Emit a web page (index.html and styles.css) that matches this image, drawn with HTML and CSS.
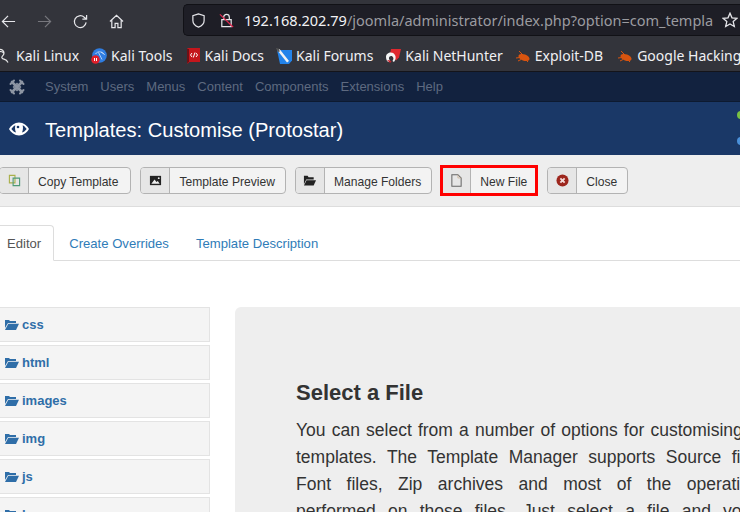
FILE: index.html
```html
<!DOCTYPE html>
<html lang="en">
<head>
<meta charset="utf-8">
<title>Templates: Customise (Protostar)</title>
<link rel="stylesheet" href="styles.css">
</head>
<body>
<header class="browser">
  <div class="toolbar">
    <div class="nav-btns">
      <svg class="tb-icon" viewBox="0 0 16 16"><path d="M15 8H1.500M7.500 2 1.500 8l6 6" fill="none" stroke="#e6e6ea" stroke-width="1.300"/></svg>
      <svg class="tb-icon" viewBox="0 0 16 16"><path d="M1 8h13.500M8.500 2l6 6-6 6" fill="none" stroke="#77777d" stroke-width="1.300"/></svg>
      <svg class="tb-icon" viewBox="0 0 16 16"><path d="M14 9a6.300 6.300 0 1 1-2-5.500L14.500 5.500M14.500 1v4.500H10" fill="none" stroke="#e6e6ea" stroke-width="1.300"/></svg>
      <svg class="tb-icon" viewBox="0 0 16 16"><path d="M1 8 8 1.500 15 8M3 6.500V14.500h3.500V10h3v4.500H13V6.500" fill="none" stroke="#e6e6ea" stroke-width="1.300"/></svg>
    </div>
    <div class="urlbar">
      <svg class="shield" viewBox="0 0 16 16"><path d="M8 1 2 2.800V8c0 3.500 3 6 6 7 3-1 6-3.500 6-7V2.800z" fill="none" stroke="#e6e6ea" stroke-width="1.300"/></svg>
      <svg class="lock" viewBox="0 0 16 16"><path d="M5 7V4.500a3 3 0 0 1 6 0V7M3 7h10v7.500H3z" fill="none" stroke="#e6e6ea" stroke-width="1.300"/><path d="M1 1.500 15 15" stroke="#e22850" stroke-width="1.300"/></svg>
      <span class="url"><span class="host">192.168.202.79</span>/joomla/administrator/index.php?option=com_templa</span>
      <svg class="star" viewBox="0 0 16 16"><path d="M8 1.200 10 5.800l5 .5-3.800 3.300 1.100 4.900L8 12l-4.300 2.500 1.100-4.900L1 6.300l5-.5z" fill="none" stroke="#e6e6ea" stroke-width="1.300"/></svg>
    </div>
  </div>
  <nav class="bookmarks">
    <a class="bm"><svg class="bm-icon" viewBox="0 0 16 16"><path d="M3 1.500C6 1 8 3 8 5 8 8 5 8 6 10c1 2 4 0 6 4.500M3 4c2-1 4 0 5 1.500" fill="none" stroke="#e8e8e8" stroke-width="1.200"/></svg>Kali Linux</a>
    <a class="bm"><svg class="bm-icon" viewBox="0 0 16 16"><circle cx="8.500" cy="7.500" r="7.300" fill="#2f7de1"/><path d="M4.500 6c2-3 6-3 9 .5M7.500 4.500l3.500 7M10 4l3.500 2.500" stroke="#cfe2f8" stroke-width=".8" fill="none"/><circle cx="4.500" cy="11.500" r="4.300" fill="#e0202a"/><path d="M3.500 10v3M5.500 10v3" stroke="#fff"/></svg>Kali Tools</a>
    <a class="bm"><svg class="bm-icon" viewBox="0 0 16 16"><path d="M2.500 0H15v14H4.500l-2 2z" fill="#c4161c"/><path d="M2 15V1h2v13z" fill="#6f1015"/><path d="M7 5 5.500 7 7 9M11 5l1.500 2L11 9M10 4.500 8.300 9.500" stroke="#fff" fill="none"/></svg>Kali Docs</a>
    <a class="bm"><svg class="bm-icon" viewBox="0 0 16 16"><path d="M1 2h15v10.500L13 16H4z" fill="#2383ea"/><path d="M1.500 2.500 11 14.500l2-1.500L3.500 1z" fill="#f2f2f2"/><path d="M0 0l3 .8.800 2.700-2 .5z" fill="#555"/></svg>Kali Forums</a>
    <a class="bm"><svg class="bm-icon" viewBox="0 0 16 16"><path d="M6 1h10l-2 8.500-3 3L5 6z" fill="#e0282f"/><path d="M1 9c0-5 7-6 9-2 1 2 1 4-1 7l-1.500-1c1.500-2 1-3.500 0-4.500-1.500-1-4 0-3.500 2.500l1 1.500-1 1.500C2.500 14 1 12 1 9z" fill="#f5f5f5"/><path d="M2 12l3 3 1.500-1.500-1-1z" fill="#c4202a"/></svg>Kali NetHunter</a>
    <a class="bm"><svg class="bm-icon" viewBox="0 0 16 16"><ellipse cx="9" cy="9.500" rx="5.800" ry="3.200" fill="#d9540f" transform="rotate(20 9 9.500)"/><path d="M4 3l4 4M1 10l4-.500M3 13l3-1.500M11 12l2 2" stroke="#d9540f" fill="none"/></svg>Exploit-DB</a>
    <a class="bm"><svg class="bm-icon" viewBox="0 0 16 16"><ellipse cx="9" cy="9.500" rx="5.800" ry="3.200" fill="#d9540f" transform="rotate(20 9 9.500)"/><path d="M4 3l4 4M1 10l4-.500M3 13l3-1.500M11 12l2 2" stroke="#d9540f" fill="none"/></svg>Google Hacking DB</a>
  </nav>
</header>

<div class="admin-nav">
  <svg class="joomla" viewBox="0 0 16 16"><g fill="none" stroke="#8d95a3" stroke-linecap="round"><path d="M3 3 13 13M13 3 3 13" stroke-width="2.600"/><path d="M8 4.500 11.500 8 8 11.500 4.500 8z" stroke-width="1.300"/><path d="M1.500 5 5 1.500M11 1.500 14.500 5M1.500 11 5 14.500M14.500 11 11 14.500" stroke-width="2"/></g></svg>
  <ul class="menu">
    <li>System</li><li>Users</li><li>Menus</li><li>Content</li><li>Components</li><li>Extensions</li><li>Help</li>
  </ul>
</div>

<div class="title-bar">
  <svg class="eye" viewBox="0 0 20 14"><path d="M10 .5C5.500.5 2 3.500 0 7c2 3.500 5.500 6.500 10 6.500S18 10.500 20 7C18 3.500 14.500.5 10 .5z" fill="#fff"/><path d="M2.300 7C3.800 5 5 4 6.300 3.300 5.800 6 6 8 7 10.500 5 10 3.500 8.500 2.300 7zM17.700 7C16.200 5 15 4 13.700 3.300 14.200 6 14 8 13 10.500 15 10 16.500 8.500 17.700 7z" fill="#1a3867"/><circle cx="9" cy="5" r="1.300" fill="#1a3867"/></svg>
  <h1 class="page-title">Templates: Customise (Protostar)</h1>
  <span class="dot dot-green"></span>
  <span class="dot dot-blue"></span>
</div>

<div class="subhead">
  <button class="btn"><span class="btn-icon"><svg class="ic" viewBox="0 0 14 14"><path d="M1.500 1.500h6v8h-6z" fill="none" stroke="#a9b04a" stroke-width="1.200"/><path d="M5.500 4.500h7v8h-7z" fill="none" stroke="#4f9a78" stroke-width="1.200"/></svg></span><span class="btn-text">Copy Template</span></button>
  <button class="btn"><span class="btn-icon"><svg class="ic" viewBox="0 0 14 14"><path d="M1 2h12v10H1z" fill="#222"/><path d="M2.500 10.500 6 6l2 2.500 1.500-1 2 3z" fill="#eee"/><circle cx="10.500" cy="4.500" r="1" fill="#eee"/></svg></span><span class="btn-text">Template Preview</span></button>
  <button class="btn"><span class="btn-icon"><svg class="ic" viewBox="0 0 14 14"><path d="M1 2h4l1 1.500h5.500V6H3.500L1 11z" fill="#222"/><path d="M3.800 6.800H14L11.500 12.500H1z" fill="#222"/></svg></span><span class="btn-text">Manage Folders</span></button>
  <button class="btn btn-marked"><span class="btn-icon"><svg class="ic ic-file" viewBox="0 0 14 14"><path d="M2 .8h6.500L12 4.300v9H2z" fill="none" stroke="#666" stroke-width="1.100"/><path d="M8.500.8v3.500H12" fill="none" stroke="#c4a98a" stroke-width=".7"/></svg></span><span class="btn-text">New File</span></button>
  <button class="btn"><span class="btn-icon"><svg class="ic" viewBox="0 0 14 14"><circle cx="7" cy="7" r="6.500" fill="#9d261d"/><path d="M4.700 4.700l4.600 4.600M9.300 4.700 4.700 9.300" stroke="#f3d9d7" stroke-width="2"/></svg></span><span class="btn-text">Close</span></button>
</div>

<div class="tabs">
  <a class="tab tab-active">Editor</a>
  <a class="tab">Create Overrides</a>
  <a class="tab">Template Description</a>
</div>

<main class="workspace">
  <ul class="tree">
    <li class="tree-item"><svg class="folder" viewBox="0 0 14 11"><path d="M0 1h4l1 1h6v2H3L0 9z" fill="#2f6ea8"/><path d="M3.300 4.800H14L11 11H0z" fill="#2f6ea8"/></svg>css</li>
    <li class="tree-item"><svg class="folder" viewBox="0 0 14 11"><path d="M0 1h4l1 1h6v2H3L0 9z" fill="#2f6ea8"/><path d="M3.300 4.800H14L11 11H0z" fill="#2f6ea8"/></svg>html</li>
    <li class="tree-item"><svg class="folder" viewBox="0 0 14 11"><path d="M0 1h4l1 1h6v2H3L0 9z" fill="#2f6ea8"/><path d="M3.300 4.800H14L11 11H0z" fill="#2f6ea8"/></svg>images</li>
    <li class="tree-item"><svg class="folder" viewBox="0 0 14 11"><path d="M0 1h4l1 1h6v2H3L0 9z" fill="#2f6ea8"/><path d="M3.300 4.800H14L11 11H0z" fill="#2f6ea8"/></svg>img</li>
    <li class="tree-item"><svg class="folder" viewBox="0 0 14 11"><path d="M0 1h4l1 1h6v2H3L0 9z" fill="#2f6ea8"/><path d="M3.300 4.800H14L11 11H0z" fill="#2f6ea8"/></svg>js</li>
    <li class="tree-item"><svg class="folder" viewBox="0 0 14 11"><path d="M0 1h4l1 1h6v2H3L0 9z" fill="#2f6ea8"/><path d="M3.300 4.800H14L11 11H0z" fill="#2f6ea8"/></svg>language</li>
  </ul>
  <section class="hero">
    <h2 class="hero-title">Select a File</h2>
    <p class="hero-text">You can select from a number of options for customising your templates. The Template Manager supports Source files, / Font files, Zip archives and most of the operations... performed&nbsp;on those files. Just select a file and you go to&nbsp;the&nbsp;editor window provided for this purpose.</p>
  </section>
</main>
</body>
</html>
```
FILE: styles.css
```css
* { box-sizing: border-box; }
html, body { margin: 0; padding: 0; }
body {
  width: 740px;
  height: 512px;
  overflow: hidden;
  background: #fff;
  font-family: "Liberation Sans", Arial, sans-serif;
  color: #333;
}
.browser { background: #33343b; height: 72px; border-bottom: 1px solid #14141a; overflow: hidden; }
.toolbar { display: flex; height: 36px; padding-top: 4px; }
.nav-btns { display: flex; width: 183px; flex: none; align-items: center; padding: 2px 0 0 1px; gap: 21px; }
.tb-icon { width: 15px; height: 15px; flex: none; }
.urlbar {
  flex: 1;
  height: 32px;
  display: flex;
  align-items: center;
  background: #1e1e26;
  border: 1px solid #111116;
  border-right: 0;
  border-radius: 5px 0 0 5px;
  padding-left: 7px;
  min-width: 0;
  position: relative;
}
.shield { width: 15px; height: 15px; flex: none; }
.lock { width: 15px; height: 15px; flex: none; margin-left: 13px; }
.url {
  font-family: "Noto Sans", sans-serif;
  font-size: 14.5px;
  color: #9b9ba0;
  margin-left: 10px;
  white-space: nowrap;
  width: 472px;
  overflow: hidden;
  flex: none;
}
.host { color: #f2f2f5; }
.star { width: 16px; height: 16px; flex: none; margin-left: 6px; }
.bookmarks {
  display: flex;
  gap: 12px;
  height: 35px;
  align-items: center;
  white-space: nowrap;
  font-family: "Noto Sans", sans-serif;
  font-size: 14px;
  color: #f0f0f3;
  margin-left: -4px;
  padding-top: 4px;
}
.bm { display: flex; align-items: center; flex: none; }
.bm:last-child { margin-left: 2px; }
.bm-icon { width: 16px; height: 16px; margin-right: 4px; flex: none; overflow: visible; }

.admin-nav { display: flex; align-items: center; height: 30px; background: #12223f; padding-left: 9px; border-bottom: 1px solid #0d1a30; }
.joomla { width: 16px; height: 16px; flex: none; }
.menu { display: flex; list-style: none; margin: 0 0 0 20px; padding: 0; font-size: 13px; color: #5e6a80; gap: 12px; white-space: nowrap; }

.title-bar { position: relative; display: flex; align-items: center; height: 53px; background: #1a3867; padding-left: 9px; }
.eye { width: 20px; height: 14px; flex: none; }
.page-title { margin: 0 0 0 16px; padding-top: 3px; font-size: 20.1px; font-weight: 400; color: #fff; white-space: nowrap; }
.dot { position: absolute; left: 737px; width: 8px; height: 8px; border-radius: 50%; }
.dot-green { top: 9px; background: #7ac143; }
.dot-blue { top: 35px; background: #4a90d9; }

.subhead { display: flex; gap: 9px; height: 52px; background: #eee; border-bottom: 1px solid #ddd; padding: 12px 0 0; }
.subhead .btn:first-child { margin-left: -1px; }
.subhead .btn:first-child .btn-text { padding-right: 12px; }
.btn {
  display: flex;
  align-items: stretch;
  height: 27px;
  padding: 0;
  background: #f3f3f3;
  border: 1px solid #b3b3b3;
  border-radius: 4px;
  font: 12.1px "Liberation Sans", Arial, sans-serif;
  color: #333;
  flex: none;
}
.btn-icon { width: 29px; display: flex; align-items: center; justify-content: center; background: #e6e6e6; border-right: 1px solid #b3b3b3; border-radius: 3px 0 0 3px; }
.btn-text { display: flex; align-items: center; padding: 2px 10px 0 9px; }
.ic { width: 13px; height: 13px; }
.btn-marked { position: relative; }
.btn-marked::after { content: ""; position: absolute; top: -3px; bottom: -3px; left: -2px; right: -1px; border: 3px solid #f00; }

.tabs { display: flex; height: 54px; padding-top: 18px; border-bottom: 1px solid #ddd; font-size: 13.1px; margin-left: -6px; }
.tab { display: flex; align-items: center; padding: 0 14px; color: #2f7cb8; height: 36px; }
.tab:last-child { margin-left: -1px; }
.tab-active { color: #555; background: #fff; border: 1px solid #ddd; border-bottom-color: #fff; border-radius: 4px 4px 0 0; padding: 0 12px; height: 36px; margin-right: 1px; }

.workspace { display: flex; align-items: flex-start; padding-top: 46px; gap: 25px; }
.tree { list-style: none; margin: 0 0 0 -10px; padding: 0; width: 220px; flex: none; }
.tree-item { display: flex; align-items: center; height: 35px; margin-bottom: 3px; padding-left: 14px; background: #f4f4f4; border: 1px solid #e3e3e3; font-size: 13px; font-weight: 700; color: #2f6ea8; }
.folder { width: 14px; height: 11px; margin-right: 3px; flex: none; }
.hero { background: #eee; border-radius: 6px; padding: 72px 61px 0; width: 620px; height: 260px; flex: none; }
.hero-title { margin: 0; font-size: 22px; line-height: 27px; font-weight: 700; }
.hero-text { margin: 11px 0 0; width: 487px; font-size: 17.5px; line-height: 27px; text-align: justify; color: #333; }
```
